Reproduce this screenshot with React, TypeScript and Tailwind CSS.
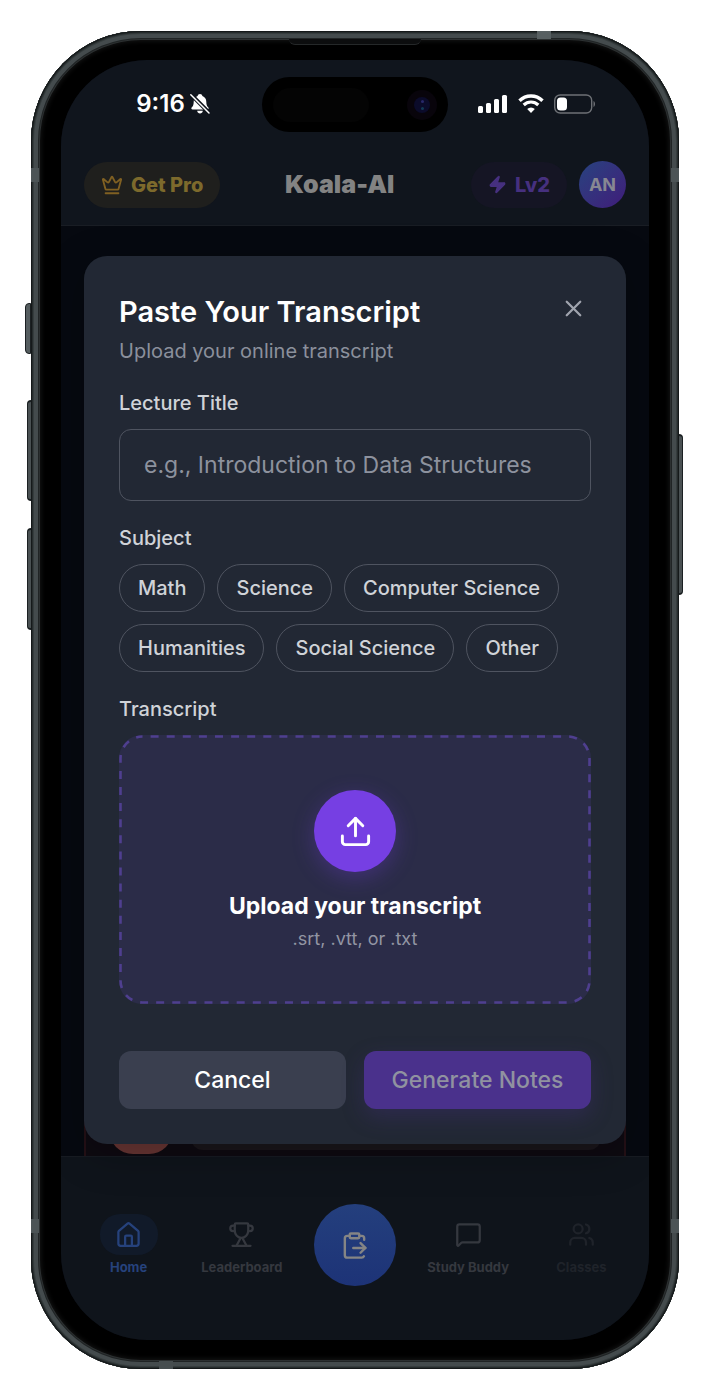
import { useState } from "react";
import { ClipboardPaste, Crown, MessageSquare, Upload, Users, X, Zap } from "lucide-react";

const subjects = ["Math", "Science", "Computer Science", "Humanities", "Social Science", "Other"];

function BellOffIcon() {
  return (
    <svg width="22" height="22" viewBox="0 0 22 22" aria-hidden="true">
      <path
        d="M11 1c1.3 0 2.2.8 2.4 2 2.500.9 3.900 3 3.900 5.700 0 3.300.7 4.400 1.900 5.500.7.7.6 2.300-.9 2.300H3.700c-1.500 0-1.700-1.500-.9-2.300 1.200-1.100 1.900-2.200 1.900-5.500C4.700 6 6.100 3.900 8.600 3 8.800 1.800 9.700 1 11 1z"
        fill="white"
      />
      <path d="M8.200 17.800h5.600c-.2 1.700-1.300 2.700-2.800 2.700s-2.600-1-2.800-2.700z" fill="white" />
      <path d="M3.200 1 21.400 19.200" stroke="#10151d" strokeWidth="1.600" />
      <path d="M1.800 1.800 20 20" stroke="#10151d" strokeWidth="3.400" />
      <path d="M1.800 1.800 20 20" stroke="white" strokeWidth="1.500" strokeLinecap="round" />
    </svg>
  );
}

function SignalIcon() {
  return (
    <svg width="30" height="20" viewBox="0 0 30 20" fill="white" aria-hidden="true">
      <rect x="0" y="12" width="5" height="7" rx="1.500" />
      <rect x="8" y="9" width="5" height="10" rx="1.500" />
      <rect x="16" y="5" width="5" height="14" rx="1.500" />
      <rect x="24" y="1" width="5" height="18" rx="1.500" />
    </svg>
  );
}

function WifiIcon() {
  return (
    <svg width="26" height="20" viewBox="0 0 26 20" fill="none" stroke="white" aria-hidden="true">
      <path d="M1.500 6.700a16.300 16.300 0 0 1 23 0" strokeWidth="3.400" />
      <path d="M5.700 11a10.400 10.400 0 0 1 14.600 0" strokeWidth="3.200" />
      <path d="M13 18.900 9.200 15a5.400 5.400 0 0 1 7.600 0z" fill="white" stroke="none" />
    </svg>
  );
}

function BatteryIcon() {
  return (
    <svg width="42" height="20" viewBox="0 0 42 20" fill="none" aria-hidden="true">
      <rect x="0.700" y="1" width="37" height="18" rx="5.500" stroke="#6d7075" strokeWidth="1.400" />
      <rect x="3" y="3.500" width="10" height="13" rx="3.500" fill="white" />
      <path d="M39.500 7c2 1 2 5 0 6z" fill="#6d7075" />
    </svg>
  );
}

function HomeIcon() {
  return (
    <svg width="27" height="27" viewBox="0 0 24 24" fill="none" stroke="currentColor" strokeWidth="2" strokeLinecap="round" strokeLinejoin="round" aria-hidden="true">
      <path d="M3 9.900a1.500 1.500 0 0 1 .5-1.100l7.600-6.400a1.400 1.400 0 0 1 1.800 0l7.600 6.400a1.500 1.500 0 0 1 .5 1.100V20a2 2 0 0 1-2 2H5a2 2 0 0 1-2-2z" />
      <path d="M9 22v-8a1 1 0 0 1 1-1h4a1 1 0 0 1 1 1v8" />
    </svg>
  );
}

function TrophyIcon() {
  return (
    <svg width="27" height="27" viewBox="0 0 24 24" fill="none" stroke="currentColor" strokeWidth="2" strokeLinecap="round" strokeLinejoin="round" aria-hidden="true">
      <path d="M6 9H4.500a2.500 2.500 0 0 1 0-5H6" />
      <path d="M18 9h1.500a2.500 2.500 0 0 0 0-5H18" />
      <path d="M4 22h16" />
      <path d="M11 15.500 7.500 22" />
      <path d="M13 15.500l3.500 6.500" />
      <path d="M18 3a1 1 0 0 0-1-1H7a1 1 0 0 0-1 1v5.500c0 3.500 2.800 6.500 6 6.500s6-3 6-6.500z" />
    </svg>
  );
}

function DynamicIsland() {
  return (
    <div className="flex h-[55px] w-[186px] items-center justify-between rounded-full bg-black px-[11px]">
      <div className="h-[34px] w-24 rounded-full bg-[#040404]" />
      <div className="flex size-[30px] items-center justify-center rounded-full bg-[#08040b]">
        <div className="flex size-4 flex-col items-center justify-center gap-1 rounded-full bg-[#0b0b2a]">
          <div className="size-[3px] rounded-full bg-[#28286a]" />
          <div className="size-[3px] rounded-full bg-[#123a55]" />
        </div>
      </div>
    </div>
  );
}

function StatusBar() {
  return (
    <div className="flex pt-[17px]">
      <div className="flex flex-1 items-center justify-center gap-1 pb-0.5 pl-6 text-white">
        <span className="text-[24px] font-semibold">9:16</span>
        <BellOffIcon />
      </div>
      <DynamicIsland />
      <div className="flex flex-1 items-center justify-center gap-[10px] pr-6 pb-0.5">
        <SignalIcon />
        <WifiIcon />
        <BatteryIcon />
      </div>
    </div>
  );
}

function Header() {
  return (
    <header className="flex items-center justify-between px-[23px] pt-[29px] pb-[17px]">
      <button type="button" className="flex h-[46px] items-center gap-2 rounded-full bg-[#1f1f1d] px-[17px] text-[20px] font-extrabold text-[#7d6a2c]">
        <Crown size={22} color="#806022" />
        Get Pro
      </button>
      <h1 className="pr-3 text-[25px] font-black text-[#838383]">Koala-AI</h1>
      <div className="flex items-center gap-3">
        <button type="button" className="flex h-[46px] items-center gap-2 rounded-full bg-[#151524] px-[17px] text-[20px] font-extrabold text-[#46307f]">
          <Zap size={19} fill="currentColor" />
          Lv2
        </button>
        <button type="button" className="size-[47px] rounded-full bg-linear-to-br from-[#25427f] to-[#3e1a7a] text-[18px] font-bold text-[#878792]">
          AN
        </button>
      </div>
    </header>
  );
}

function UploadZone() {
  return (
    <label className="relative mt-[11px] flex cursor-pointer flex-col items-center rounded-[23px] bg-[#2b2c48] pt-[55px] pb-[54px]">
      <svg className="absolute inset-0 size-full" fill="none" aria-hidden="true">
        <rect
          className="h-[calc(100%-3px)] w-[calc(100%-3px)]"
          x="1.500"
          y="1.500"
          rx="22"
          stroke="#4f3f8f"
          strokeWidth="2.600"
          strokeDasharray="8 8.100"
          strokeDashoffset="8"
        />
      </svg>
      <input type="file" accept=".srt,.vtt,.txt" className="sr-only" />
      <span className="flex size-[82px] items-center justify-center rounded-full bg-[#763fe3] text-white shadow-[0_6px_22px_rgba(118,63,227,0.3)]">
        <Upload size={35} />
      </span>
      <span className="mt-[17px] text-[23px] leading-[35px] font-bold text-white">Upload your transcript</span>
      <span className="mt-[3px] text-[18px] leading-[23px] text-[#9295a3]">.srt, .vtt, or .txt</span>
    </label>
  );
}

function TranscriptDialog() {
  const [title, setTitle] = useState("");
  const [subject, setSubject] = useState<string | null>(null);

  return (
    <section
      role="dialog"
      aria-labelledby="dialog-title"
      className="relative rounded-[23px] bg-[#222834] p-[35px] shadow-[0_10px_40px_rgba(0,0,0,0.25)]"
    >
      <div className="flex items-start justify-between">
        <h2 id="dialog-title" className="text-[29px] leading-[41px] font-semibold text-white">
          Paste Your Transcript
        </h2>
        <button type="button" aria-label="Close" className="p-1 text-[#a0a4ae]">
          <X size={27} strokeWidth={2} />
        </button>
      </div>
      <p className="mt-[5px] text-[20px] leading-[29px] text-[#8b909c]">Upload your online transcript</p>

      <label htmlFor="lecture-title" className="mt-[23px] block text-[20px] leading-[29px] font-medium text-[#d0d3d8]">
        Lecture Title
      </label>
      <input
        id="lecture-title"
        value={title}
        onChange={(e) => setTitle(e.target.value)}
        placeholder="e.g., Introduction to Data Structures"
        className="mt-[11px] h-[72px] w-full rounded-xl border border-[#4f5460] bg-transparent px-6 text-[23px] text-white placeholder:text-[#8d929e]"
      />

      <h3 className="mt-[23px] text-[20px] leading-[29px] font-medium text-[#d0d3d8]">Subject</h3>
      <div className="mt-[11px] flex flex-wrap gap-3">
        {subjects.map((name) => (
          <button
            key={name}
            type="button"
            aria-pressed={subject === name}
            onClick={() => setSubject(name)}
            className={`h-12 rounded-full border px-[18px] text-[20px] font-medium text-[#d0d3d8] ${
              subject === name ? "border-[#763fe3] bg-[#2b2c48]" : "border-[#4f5460]"
            }`}
          >
            {name}
          </button>
        ))}
      </div>

      <h3 className="mt-[23px] text-[20px] leading-[29px] font-medium text-[#d0d3d8]">Transcript</h3>
      <UploadZone />

      <div className="mt-[47px] grid grid-cols-2 gap-[18px]">
        <button type="button" className="h-[58px] rounded-xl bg-[#3a3f4f] text-[23px] font-medium text-white">
          Cancel
        </button>
        <button
          type="button"
          disabled
          className="h-[58px] rounded-xl bg-[#4a318c] text-[23px] font-medium text-[#9092a0] shadow-[0_8px_22px_rgba(74,49,140,0.3)]"
        >
          Generate Notes
        </button>
      </div>
    </section>
  );
}

// Bottom edge of the lecture card that shows under the dialog
function LectureCard() {
  return (
    <div className="absolute inset-x-[23px] bottom-0 flex h-[60px] items-start gap-[18px] border-x-2 border-[#241016] bg-[#0e0a11] px-[23px]">
      <div className="h-[58px] w-[64px] rounded-b-[24px] bg-[#693634]" />
      <div className="h-[54px] flex-1 rounded-b-xl bg-[#1a161b]" />
    </div>
  );
}

function BottomNav() {
  const item = "flex flex-col items-center gap-[3px] text-[13px] leading-[18px] font-bold";
  const iconBox = "flex h-[41px] w-[58px] items-center justify-center rounded-[20px]";

  return (
    <nav className="grid grid-cols-5 items-center border-t border-[#171b22] bg-[#0f141b] px-[11px] pt-[47px] pb-[54px]">
      <a href="#home" className={`${item} text-[#26427c]`}>
        <span className={`${iconBox} bg-[#111a29]`}>
          <HomeIcon />
        </span>
        Home
      </a>
      <a href="#leaderboard" className={`${item} text-[#35383f]`}>
        <span className={iconBox}>
          <TrophyIcon />
        </span>
        Leaderboard
      </a>
      <button
        type="button"
        aria-label="Paste transcript"
        className="flex size-[82px] items-center justify-center justify-self-center rounded-full bg-linear-to-b from-[#243f7d] to-[#1d3377] text-[#858585]"
      >
        <ClipboardPaste size={29} />
      </button>
      <a href="#study-buddy" className={`${item} text-[#35383f]`}>
        <span className={iconBox}>
          <MessageSquare size={27} />
        </span>
        Study Buddy
      </a>
      <a href="#classes" className={`${item} text-[#1f232a]`}>
        <span className={iconBox}>
          <Users size={27} />
        </span>
        Classes
      </a>
    </nav>
  );
}

function PhoneHardware() {
  return (
    <>
      {/* side buttons */}
      <div className="absolute top-[272px] -left-1.5 h-[51px] w-1.5 rounded-l-sm border border-[#1b2022] bg-[#555d5f]" />
      <div className="absolute top-[369px] -left-1 h-[101px] w-1 rounded-l-sm border-y-2 border-l border-[#1b2022] bg-[#4a5153]" />
      <div className="absolute top-[497px] -left-1 h-[102px] w-1 rounded-l-sm border-y-2 border-l border-[#1b2022] bg-[#4a5153]" />
      <div className="absolute top-[403px] -right-1 h-[161px] w-1 rounded-r-sm border-y-2 border-r border-[#1b2022] bg-[#4a5153]" />
      {/* antenna bands */}
      <div className="absolute top-[137px] left-0 h-3.5 w-2 bg-[#4c5456]" />
      <div className="absolute top-[137px] right-0 h-3.5 w-2 bg-[#4c5456]" />
      <div className="absolute bottom-[136px] left-0 h-3.5 w-2 bg-[#4c5456]" />
      <div className="absolute right-0 bottom-[136px] h-3.5 w-2 bg-[#4c5456]" />
      <div className="absolute top-0 right-[128px] h-2 w-3.5 bg-[#586062]" />
      <div className="absolute bottom-0 left-[128px] h-2 w-3.5 bg-[#464d4f]" />
      {/* earpiece */}
      <div className="absolute top-2 left-1/2 h-1.5 w-[132px] -translate-x-1/2 rounded-b-md border-b border-[#252829] bg-[#0c0d0e]" />
    </>
  );
}

export default function App() {
  return (
    <div className="bg-white px-[31px] py-[31px] font-['Inter',sans-serif]">
      <div className="relative rounded-[110px] bg-black px-[30px] py-[29px] shadow-[inset_0_0_0_1px_#15191a,inset_0_0_0_2px_#262c2d,inset_0_0_0_3px_#363d3e,inset_0_0_0_7px_#444b4d,inset_0_0_0_8px_#202425,inset_0_0_0_9px_#2c3031,inset_0_0_5px_10px_#151616]">
        <PhoneHardware />
        <div className="overflow-hidden rounded-[86px] bg-[#060910]">
          <div className="border-b border-[#191d24] bg-[#10151d]">
            <StatusBar />
            <Header />
          </div>
          <main className="relative px-[23px] pt-[30px] pb-3">
            <LectureCard />
            <TranscriptDialog />
          </main>
          <BottomNav />
        </div>
      </div>
    </div>
  );
}
